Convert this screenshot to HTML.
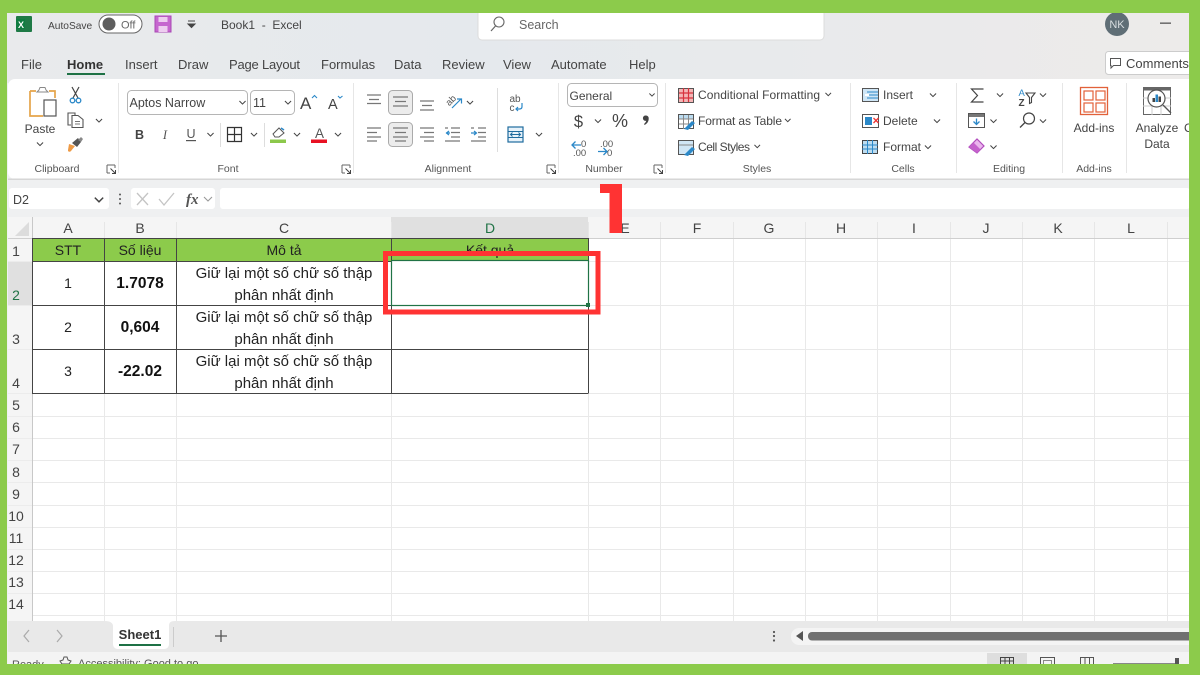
<!DOCTYPE html>
<html><head><meta charset="utf-8"><style>
html,body{margin:0;padding:0;background:#8CCB4B;width:1200px;height:675px;overflow:hidden}
svg{display:block;font-family:"Liberation Sans","Noto Sans CJK SC",sans-serif}
text{fill:#444}
.t{font-size:12px}
.tab{font-size:13px;fill:#444}
.g{font-size:10.5px;fill:#555;text-anchor:middle}
.h{font-size:14px;fill:#444;text-anchor:middle}
.c{font-size:14px;fill:#222;text-anchor:middle}
.d{font-size:15px;fill:#222;text-anchor:middle}
.b{font-size:15.500px;fill:#111;text-anchor:middle;font-weight:bold}
</style></head><body>
<svg width="1200" height="675" viewBox="0 0 1200 675" xmlns="http://www.w3.org/2000/svg">
<defs>
<linearGradient id="tb" x1="0" x2="1"><stop offset="0" stop-color="#e9eaec"/><stop offset=".4" stop-color="#e5e9ed"/><stop offset="1" stop-color="#edebea"/></linearGradient>
<symbol id="cv" viewBox="0 0 8 5" overflow="visible"><path d="M0.5 0.5L4 4L7.5 0.5" fill="none" stroke="#444" stroke-width="1.2"/></symbol>
</defs>
<rect x="7" y="13" width="1182" height="652" fill="#f0f1f2"/>
<rect x="7" y="13" width="1182" height="70" fill="url(#tb)"/>

<!-- title bar -->
<rect x="16" y="16" width="16" height="16" rx="1" fill="#1f7a46"/><rect x="16" y="19" width="9" height="10" fill="#107c41"/><text x="18" y="28" style="font-size:9px;font-weight:bold;fill:#fff">X</text>
<text x="48" y="29" style="font-size:10.200px;fill:#444">AutoSave</text>
<rect x="99" y="15" width="43" height="18" rx="9" fill="#fff" stroke="#666" stroke-width="1"/><circle cx="109" cy="24" r="6.5" fill="#5e5e5e"/><text x="121" y="28.500" style="font-size:11px;fill:#666">Off</text>
<rect x="155" y="16" width="16" height="16" fill="#c666cf" stroke="#a948b3"/><rect x="158.500" y="17" width="9" height="5" fill="#eecdf0"/><rect x="158.500" y="26" width="9" height="6" fill="#eecdf0"/>
<path d="M188 21h7M188 24l3.500 3.500L195 24z" fill="#444" stroke="#444"/>
<text x="221" y="29" style="font-size:12px;fill:#444">Book1 &#160;- &#160;Excel</text>

<rect x="478" y="6" width="346" height="34" rx="4" fill="#fff" stroke="#dcdcdc"/>
<circle cx="499" cy="22" r="5" fill="none" stroke="#666" stroke-width="1.1"/><path d="M495.500 26L491 31" stroke="#666" stroke-width="1.2"/>
<text x="519" y="29" style="font-size:12.5px;fill:#666">Search</text>
<circle cx="1117" cy="24" r="12" fill="#5f6e76"/><text x="1117" y="28" text-anchor="middle" style="font-size:11px;fill:#d8dde0">NK</text>
<rect x="1160" y="22.500" width="11" height="1.300" fill="#555"/>

<!-- tabs -->
<text class="tab" x="21" y="69">File</text>
<text class="tab" x="67" y="69" style="font-weight:bold;fill:#333">Home</text>
<rect x="67" y="73" width="38" height="2" fill="#1e7145"/>
<text class="tab" x="125" y="69">Insert</text>
<text class="tab" x="178" y="69">Draw</text>
<text class="tab" x="229" y="69" textLength="71">Page Layout</text>
<text class="tab" x="321" y="69">Formulas</text>
<text class="tab" x="394" y="69">Data</text>
<text class="tab" x="442" y="69">Review</text>
<text class="tab" x="503" y="69">View</text>
<text class="tab" x="551" y="69">Automate</text>
<text class="tab" x="629" y="69">Help</text>
<rect x="1105.500" y="51.500" width="100" height="23" rx="3" fill="#fff" stroke="#ccc"/>
<path d="M1110.500 58.500h10v7h-7l-2.500 2.500v-2.500h-.5z" fill="none" stroke="#555"/>
<text x="1126" y="68" style="font-size:13px;fill:#444">Comments</text>

<!-- ribbon -->
<rect x="8" y="79" width="1190" height="100" rx="7" fill="#fff"/>
<rect x="8" y="178.500" width="1181" height="1.500" fill="#d6d6d6"/>
<g stroke="#e6e6e6" stroke-width="1"><path d="M118.500 83v90M353.500 83v90M558.500 83v90M665.500 83v90M850.500 83v90M956.500 83v90M1062.500 83v90M1126.500 83v90"/></g>

<!-- clipboard -->
<path d="M30 91h6M49 91h6v7M30 91v25H43" fill="none" stroke="#e5a44a" stroke-width="1.700"/>
<path d="M37 92l2-2 1-2.500h5l1 2.500 2 2z" fill="#fff" stroke="#888"/>
<rect x="44" y="100" width="12" height="16" fill="#fff" stroke="#555" stroke-width="1.200"/>
<text x="40" y="133" text-anchor="middle" style="font-size:12px;fill:#444">Paste</text>
<use href="#cv" x="36.500" y="142" width="7" height="4.500"/>
<path d="M72 87l6 11M79 87l-6 11" stroke="#444" stroke-width="1.200"/><circle cx="72.500" cy="100.500" r="2.300" fill="none" stroke="#2b88c8" stroke-width="1.300"/><circle cx="78.500" cy="100.500" r="2.300" fill="none" stroke="#2b88c8" stroke-width="1.300"/>
<path d="M71 125h-3v-12h7v2" fill="none" stroke="#555" stroke-width="1.100"/><path d="M72 115.500h6l5 4v8h-11z" fill="#fff" stroke="#555" stroke-width="1.100"/><path d="M75 121.500h5M75 124h5" stroke="#777"/>
<use href="#cv" x="95.500" y="118.500" width="7" height="4.500"/>
<path d="M69 144l6 2-4 5c-1 1-2 1-3 0l-0-1z" fill="#ee9a45"/><path d="M72 143l6-5 3 4-4 5z" fill="#555"/><path d="M78 140l3-3 2 2-2 3z" fill="#888"/>
<text class="g" x="57" y="172">Clipboard</text>
<g id="launch"><path d="M107 165h8M107 165v8M115 165v3M107 173h3" stroke="#666" fill="none"/><path d="M110.500 168.500l5 5M115.500 170v3.500h-3.500" stroke="#444" fill="none"/></g>

<!-- font -->
<rect x="127.500" y="90.500" width="120" height="24" rx="4" fill="#fff" stroke="#b5b5b5"/>
<text x="129.500" y="107" style="font-size:12.500px;fill:#444">Aptos Narrow</text><use href="#cv" x="239" y="100.500" width="7" height="4.500"/>
<rect x="250.500" y="90.500" width="44" height="24" rx="4" fill="#fff" stroke="#b5b5b5"/>
<text x="253" y="107" style="font-size:12.500px;fill:#444">11</text><use href="#cv" x="284.500" y="100.500" width="7" height="4.500"/>
<text x="300" y="109" style="font-size:17px;fill:#444">A</text><path d="M312 98l2.500-2.500L317 98" stroke="#2b88c8" fill="none" stroke-width="1.100"/>
<text x="328" y="109" style="font-size:14.500px;fill:#444">A</text><path d="M338 96l2 2 2.500-2" stroke="#2b88c8" fill="none" stroke-width="1.100"/>
<text x="139.500" y="139" text-anchor="middle" style="font-size:12.500px;font-weight:bold;fill:#444">B</text>
<text x="165" y="139" text-anchor="middle" style="font-size:12.500px;font-style:italic;fill:#555;font-family:'Liberation Serif',serif">I</text>
<text x="191" y="138" text-anchor="middle" style="font-size:12.500px;fill:#555">U</text><rect x="186" y="140" width="10" height="1.200" fill="#555"/>
<use href="#cv" x="207" y="132.500" width="7" height="4.500"/>
<path d="M220.500 123v24M264.500 123v24" stroke="#ddd"/>
<path d="M227.500 127.500h14v14h-14zM234.500 127.500v14M227.500 134.500h14" fill="none" stroke="#333" stroke-width="1.200"/>
<use href="#cv" x="250.500" y="132.500" width="7" height="4.500"/>
<path d="M273 134l6-6 5 5-5 4h-4z" fill="#fff" stroke="#555"/><path d="M281 128l3 2" stroke="#2b88c8" stroke-width="1.500"/><rect x="270" y="139.500" width="16" height="3.500" fill="#8cc84b"/>
<use href="#cv" x="293.500" y="132.500" width="7" height="4.500"/>
<text x="319.500" y="138" text-anchor="middle" style="font-size:13.500px;fill:#555">A</text><rect x="311" y="139.500" width="16" height="3.500" fill="#e81123"/>
<use href="#cv" x="334.500" y="132.500" width="7" height="4.500"/>
<text class="g" x="228" y="172">Font</text>
<use href="#launch" x="235"/>

<!-- alignment -->
<rect x="388.500" y="90.500" width="24" height="24" rx="4" fill="#ececec" stroke="#aaa"/>
<rect x="388.500" y="122.500" width="24" height="24" rx="4" fill="#ececec" stroke="#aaa"/>
<g stroke="#777" stroke-width="1.300">
<path d="M367 95h14M369 99.500h10M367 103.500h14"/>
<path d="M393 97h15M395 101.500h11M393 106h15"/>
<path d="M420 101h14M422 105.500h10M420 110h14"/>
<path d="M367 128h14M367 132.500h10M367 137h14M367 141h10"/>
<path d="M393 128h15M395 132.500h11M393 137h15M395 141h11"/>
<path d="M420 128h14M424 132.500h10M420 137h14M424 141h10"/>
<path d="M451 128h9M451 132.500h9M451 137h9M445 141h15M445 128h3"/>
<path d="M478 128h8M478 132.500h8M478 137h8M471 141h15M471 128h3"/>
</g>
<path d="M446 133h4M449 131l-2.500 2 2.500 2" stroke="#2b88c8" fill="none" stroke-width="1.200"/>
<path d="M471 133h5M474 131l2.500 2-2.500 2" stroke="#2b88c8" fill="none" stroke-width="1.200"/>
<text x="445" y="104" transform="rotate(-45 450 100)" style="font-size:9.500px;fill:#555">ab</text>
<path d="M452 108l9-9M457 99h4.500v4.500" stroke="#2b88c8" fill="none" stroke-width="1.200"/>
<use href="#cv" x="466.500" y="100.500" width="7" height="4.500"/>
<path d="M497.500 88v64" stroke="#ddd"/>
<text x="509.500" y="102" style="font-size:10px;fill:#555">ab</text><text x="509.500" y="111" style="font-size:10px;fill:#555">c</text>
<path d="M522 103v3.500c0 1.500-1 2.500-2.500 2.500H516M518 107l-2 2 2 2" stroke="#2b88c8" fill="none" stroke-width="1.200"/>
<rect x="508" y="127" width="15" height="15" fill="#e7f2fa" stroke="#1f6c9e" stroke-width="1.200"/><path d="M508 131.500h15M508 137.500h15" stroke="#1f6c9e"/><path d="M510.500 134.500h10M512.500 132.500l-2 2 2 2M518.500 132.500l2 2-2 2" stroke="#1f6c9e" fill="none"/>
<use href="#cv" x="535.500" y="132.500" width="7" height="4.500"/>
<text class="g" x="448" y="172">Alignment</text>
<use href="#launch" x="440"/>

<!-- number -->
<rect x="567.500" y="83.500" width="90" height="23" rx="4" fill="#fff" stroke="#b5b5b5"/>
<text x="569.500" y="100" style="font-size:12px;fill:#444">General</text><use href="#cv" x="649" y="93" width="6" height="4"/>
<text x="578.500" y="127" text-anchor="middle" style="font-size:16.500px;fill:#444">$</text><use href="#cv" x="594.500" y="119" width="7" height="4.500"/>
<text x="620" y="127" text-anchor="middle" style="font-size:18px;fill:#444">%</text>
<path d="M646 115.500a2.700 2.700 0 0 1 2.700 3c0 3-1.500 5-4 6.500l-.7-1c1.200-1 2-2 2.200-3.200a2.700 2.700 0 1 1-.2-5.300z" fill="#444"/>
<text x="581" y="147" style="font-size:9.500px;fill:#555">0</text><text x="573" y="156" style="font-size:9.500px;fill:#555">.00</text>
<path d="M572 145h9M575.500 141.500l-3.500 3.500 3.500 3.500" stroke="#2b88c8" fill="none" stroke-width="1.300"/>
<text x="600" y="147" style="font-size:9.500px;fill:#555">.00</text><text x="607" y="156" style="font-size:9.500px;fill:#555">0</text>
<path d="M598 151.500h9M603.500 148l3.500 3.500-3.500 3.500" stroke="#2b88c8" fill="none" stroke-width="1.300"/>
<text class="g" x="604" y="172">Number</text>
<use href="#launch" x="547"/>

<!-- styles -->
<rect x="678.500" y="88.500" width="15" height="14" fill="#f4b6b6" stroke="#555"/><path d="M679 93h14M679 98h14M683.500 88v14M688.500 88v14" stroke="#d8323c" stroke-width="1.200"/>
<text class="t" x="698" y="99" textLength="122">Conditional Formatting</text><use href="#cv" x="825" y="92.500" width="6.500" height="4"/>
<rect x="678.500" y="114.500" width="15" height="14" fill="#fff" stroke="#555"/><rect x="679" y="115" width="14" height="4" fill="#bcdcf0"/><path d="M679 119h14M679 124h14M683.500 115v14M688.500 115v14" stroke="#888"/><path d="M684 129l8-8 3 2-7 7z" fill="#2b88c8"/>
<text class="t" x="698" y="125" textLength="84">Format as Table</text><use href="#cv" x="784.500" y="118.500" width="6.500" height="4"/>
<rect x="678.500" y="140.500" width="15" height="14" fill="#d0e6f5" stroke="#555"/><path d="M684 155l8-8 3 2-7 7z" fill="#2b88c8"/><path d="M679 145h14" stroke="#888"/>
<text class="t" x="698" y="151" textLength="52">Cell Styles</text><use href="#cv" x="754" y="144.500" width="6.500" height="4"/>
<text class="g" x="757" y="172">Styles</text>

<!-- cells -->
<rect x="862.500" y="88.500" width="16" height="13" fill="#cfe6f6" stroke="#555"/><path d="M867 92h11M867 95h11M867 98h11" stroke="#2b88c8"/><path d="M869 95h-4" stroke="#fff" stroke-width="2"/>
<text class="t" x="883" y="99">Insert</text><use href="#cv" x="929.500" y="93" width="7" height="4.500"/>
<rect x="862.500" y="114.500" width="16" height="13" fill="#fff" stroke="#555"/><rect x="865" y="117" width="7" height="8" fill="#2b88c8"/><path d="M873.500 118l5 5M878.500 118l-5 5" stroke="#e33" stroke-width="1.300"/>
<text class="t" x="883" y="125">Delete</text><use href="#cv" x="933.500" y="119" width="7" height="4.500"/>
<rect x="862.500" y="140.500" width="15" height="13" fill="#bcdcf0" stroke="#444"/><path d="M867.500 140v14M872.500 140v14M862 145h16M862 149h16" stroke="#2b88c8"/>
<text class="t" x="883" y="151">Format</text><use href="#cv" x="924.500" y="145" width="7" height="4.500"/>
<text class="g" x="903" y="172">Cells</text>

<!-- editing -->
<path d="M983.500 89h-12l6 6.500-6 6.500h12" fill="none" stroke="#444" stroke-width="1.200"/><use href="#cv" x="996.500" y="93" width="7" height="4.500"/>
<text x="1018.500" y="96" style="font-size:9.500px;fill:#2b88c8">A</text><text x="1018.500" y="106" style="font-size:10px;font-weight:bold;fill:#444">Z</text><path d="M1026 93h9l-3.500 4.500v5l-2 1v-6z" fill="none" stroke="#444" stroke-width="1.100"/><use href="#cv" x="1039.500" y="93" width="7" height="4.500"/>
<rect x="968.500" y="113.500" width="16" height="14" fill="#fff" stroke="#555"/><rect x="969" y="114" width="15" height="3" fill="#777"/><path d="M976.500 118.500v6M973.500 121.500l3 3 3-3" fill="none" stroke="#2b88c8" stroke-width="1.300"/><use href="#cv" x="990" y="119" width="7" height="4.500"/>
<circle cx="1029" cy="118.500" r="5.500" fill="none" stroke="#444" stroke-width="1.200"/><path d="M1025 122.500l-5 5" stroke="#444" stroke-width="1.300"/><use href="#cv" x="1039.500" y="119" width="7" height="4.500"/>
<path d="M969 147l8-8 7 7-7 7z" fill="#eab5ed" stroke="#b14cbd" stroke-width="1.200"/><path d="M969 147l4.500-4.500 7 7-3.500 3.500z" fill="#c461cc"/><use href="#cv" x="990" y="145" width="7" height="4.500"/>
<text class="g" x="1009" y="172">Editing</text>

<!-- addins / analyze -->
<rect x="1080.500" y="87.500" width="27" height="27" fill="#fff" stroke="#e2613a" stroke-width="1.300"/><rect x="1084" y="91" width="9" height="9" fill="none" stroke="#e2613a" stroke-width="1.200"/><rect x="1096" y="91" width="9" height="9" fill="none" stroke="#e2613a" stroke-width="1.200"/><rect x="1084" y="103" width="9" height="9" fill="none" stroke="#e2613a" stroke-width="1.200"/><rect x="1096" y="103" width="9" height="9" fill="none" stroke="#e2613a" stroke-width="1.200"/>
<text x="1094" y="132" text-anchor="middle" style="font-size:12px;fill:#444">Add-ins</text>
<text class="g" x="1094" y="172">Add-ins</text>
<rect x="1143.500" y="87.500" width="27" height="27" fill="#fff" stroke="#666"/><rect x="1143.500" y="87.500" width="27" height="3" fill="#666"/><path d="M1143 98h28M1143 106h28M1152 91v24M1161 91v24" stroke="#ccc"/>
<circle cx="1156.500" cy="98.500" r="8.500" fill="#fff" stroke="#555" stroke-width="1.200"/><rect x="1152.500" y="98" width="2.500" height="4" fill="#444"/><rect x="1155.500" y="94.500" width="2.500" height="7.500" fill="#2b88c8"/><rect x="1158.500" y="96.500" width="2.500" height="5.500" fill="#444"/><path d="M1163 105l8 8" stroke="#555" stroke-width="1.300"/>
<text x="1157" y="132" text-anchor="middle" style="font-size:12px;fill:#444">Analyze</text>
<text x="1157" y="148" text-anchor="middle" style="font-size:12px;fill:#444">Data</text>
<text x="1184" y="132" style="font-size:12px;fill:#444">C</text>

<!-- formula bar -->
<rect x="8" y="180" width="1181" height="37" fill="#eff0f1"/>
<rect x="9" y="188" width="100" height="21" rx="3" fill="#fff"/><text x="13" y="204" style="font-size:12.500px;fill:#444">D2</text><use href="#cv" x="94" y="197" width="10" height="6"/>
<circle cx="120" cy="194.500" r="1" fill="#555"/><circle cx="120" cy="199" r="1" fill="#555"/><circle cx="120" cy="203.500" r="1" fill="#555"/>
<rect x="131" y="188" width="84" height="21" rx="3" fill="#fff"/>
<path d="M137 193l11 12M148 193l-11 12" stroke="#c4c4c4" stroke-width="1.300"/><path d="M159 199l5 6 10-12" fill="none" stroke="#c4c4c4" stroke-width="1.300"/>
<text x="186" y="204" style="font-size:15px;font-style:italic;font-weight:bold;fill:#555;font-family:'Liberation Serif',serif">fx</text><path d="M204 197l4 4 4-4" stroke="#999" fill="none" stroke-width="1.100"/>
<rect x="220" y="188" width="970" height="21" rx="3" fill="#fff"/>

<!-- grid -->
<rect x="8" y="217" width="1181" height="404" fill="#fff"/>
<rect x="8" y="217" width="1181" height="21" fill="#f5f5f5"/>
<rect x="8" y="217" width="24" height="404" fill="#f5f5f5"/>
<path d="M29 222v14H15z" fill="#dcdcdc"/>
<rect x="391" y="217" width="197" height="21" fill="#e0e0e0"/>
<rect x="8" y="261" width="24" height="44" fill="#e0e0e0"/>
<g stroke="#e9e9e9" stroke-width="1">
<path d="M104.500 238V621M176.500 238V621M391.500 238V621M588.500 238V621M660.500 238V621M733.500 238V621M805.500 238V621M877.500 238V621M950.500 238V621M1022.500 238V621M1094.500 238V621M1167.500 238V621"/>
<path d="M104.500 222v16M176.500 222v16M391.500 222v16M588.500 222v16M660.500 222v16M733.500 222v16M805.500 222v16M877.500 222v16M950.500 222v16M1022.500 222v16M1094.500 222v16M1167.500 222v16" stroke="#e6e6e6"/>
<path d="M32 261.500H1189M32 305.500H1189M32 349.500H1189M32 393.500H1189M32 416.500H1189M32 438.500H1189M32 460.500H1189M32 482.500H1189M32 505.500H1189M32 527.500H1189M32 549.500H1189M32 571.500H1189M32 593.500H1189M32 615.500H1189"/>
<path d="M8 416.500H32M8 438.500H32M8 460.500H32M8 482.500H32M8 505.500H32M8 527.500H32M8 549.500H32M8 571.500H32M8 593.500H32M8 393.500H32M8 349.500H32M8 305.500H32M8 261.500H32" stroke="#ececec"/>
</g>
<path d="M8 238.500H1189" stroke="#cfcfcf"/>
<path d="M32.500 217V621" stroke="#c8c8c8"/>
<rect x="32" y="238" width="556" height="23" fill="#8ccb4b"/>
<g stroke="#444" stroke-width="1" fill="none">
<path d="M32.500 238V393.500M104.500 238V393.500M176.500 238V393.500M391.500 238V393.500M588.500 238V393.500"/>
<path d="M32 238.500H588M32 261.500H588M32 305.500H588M32 349.500H588M32 393.500H588"/>
</g>
<text class="h" x="68" y="233">A</text><text class="h" x="140" y="233">B</text><text class="h" x="284" y="233">C</text><text class="h" x="490" y="233" style="fill:#217346">D</text><text class="h" x="625" y="233">E</text><text class="h" x="697" y="233">F</text><text class="h" x="769" y="233">G</text><text class="h" x="841" y="233">H</text><text class="h" x="914" y="233">I</text><text class="h" x="986" y="233">J</text><text class="h" x="1058" y="233">K</text><text class="h" x="1131" y="233">L</text>
<text class="h" x="16" y="256">1</text><text class="h" x="16" y="300" style="fill:#217346">2</text><text class="h" x="16" y="344">3</text><text class="h" x="16" y="388">4</text><text class="h" x="16" y="410">5</text><text class="h" x="16" y="432">6</text><text class="h" x="16" y="454">7</text><text class="h" x="16" y="477">8</text><text class="h" x="16" y="499">9</text><text class="h" x="16" y="521">10</text><text class="h" x="16" y="543">11</text><text class="h" x="16" y="565">12</text><text class="h" x="16" y="587">13</text><text class="h" x="16" y="609">14</text>

<text class="c" x="68" y="255">STT</text><text class="c" x="140" y="255">Số liệu</text><text class="c" x="284" y="255">Mô tả</text><text class="c" x="490" y="255">Kết quả</text>
<text class="c" x="68" y="288">1</text><text class="b" x="140" y="288">1.7078</text>
<text class="d" x="284" y="278">Giữ lại một số chữ số thập</text><text class="d" x="284" y="300">phân nhất định</text>
<text class="c" x="68" y="332">2</text><text class="b" x="140" y="332">0,604</text>
<text class="d" x="284" y="322">Giữ lại một số chữ số thập</text><text class="d" x="284" y="344">phân nhất định</text>
<text class="c" x="68" y="376">3</text><text class="b" x="140" y="376">-22.02</text>
<text class="d" x="284" y="366">Giữ lại một số chữ số thập</text><text class="d" x="284" y="388">phân nhất định</text>

<!-- selection -->
<rect x="391.500" y="260.500" width="197" height="45" fill="#fff" stroke="#217346" stroke-width="1.200"/>
<rect x="586" y="303" width="4" height="4" fill="#217346"/>
<rect x="385.500" y="253.500" width="212.500" height="58.500" fill="none" stroke="#ff3333" stroke-width="5"/>
<path d="M600 184h22v49h-12.500v-40h-9.500z" fill="#ff3333"/>

<!-- sheet tabs -->
<rect x="8" y="621" width="1181" height="31" fill="#e9e9e9"/>
<rect x="8" y="652" width="1181" height="13" fill="#f4f4f4"/>
<path d="M29 630l-5 6 5 6M57 630l5 6-5 6" fill="none" stroke="#aaa" stroke-width="1.200"/>
<path d="M105 621h70c-5 0-6 2-6 5v18c0 3-2 5-5 5h-46c-3 0-5-2-5-5v-18c0-3-3-5-8-5z" fill="#fff"/>
<path d="M173.500 627v20" stroke="#ccc"/>
<text x="140" y="639" text-anchor="middle" style="font-size:13px;font-weight:bold;fill:#333">Sheet1</text>
<rect x="119" y="644" width="42" height="2" fill="#1e7145"/>
<path d="M221 630v12M215 636h12" stroke="#555" stroke-width="1.300"/>
<circle cx="774" cy="632" r="1.100" fill="#555"/><circle cx="774" cy="636" r="1.100" fill="#555"/><circle cx="774" cy="640.500" r="1.100" fill="#555"/>
<rect x="791" y="628" width="420" height="17" rx="8" fill="#f4f4f4"/>
<path d="M796 636l7-5v10z" fill="#555"/>
<rect x="808" y="632" width="400" height="8.500" rx="4" fill="#707070"/>

<!-- status -->
<text x="12" y="668" style="font-size:11px;fill:#555">Ready</text>
<path d="M60 661l3-1 1-3h3l1 3 3 1-2 3h-7z" fill="none" stroke="#555"/>
<text x="78" y="667" style="font-size:11px;fill:#555">Accessibility: Good to go</text>
<rect x="987" y="653" width="40" height="12" fill="#dedede"/>
<path d="M1000.500 657.500h13v8h-13zM1000.500 661h13M1005 657v8M1009.500 657v8" fill="none" stroke="#444"/>
<rect x="1040.500" y="657.500" width="14" height="8" fill="none" stroke="#555"/><rect x="1043.500" y="660.500" width="8" height="5" fill="none" stroke="#888"/>
<path d="M1080.500 657.500h13v8h-13zM1085 657v8M1089.500 657v8" fill="none" stroke="#555"/>
<rect x="1113" y="663" width="65" height="1" fill="#888"/><rect x="1175" y="658" width="4" height="7" fill="#555"/>

<!-- green frame -->
<rect x="0" y="0" width="1200" height="13" fill="#8ccb4b"/>
<rect x="0" y="664" width="1200" height="11" fill="#8ccb4b"/>
<rect x="0" y="0" width="7" height="675" fill="#8ccb4b"/>
<rect x="1189" y="0" width="11" height="675" fill="#8ccb4b"/>
</svg>
</body></html>
